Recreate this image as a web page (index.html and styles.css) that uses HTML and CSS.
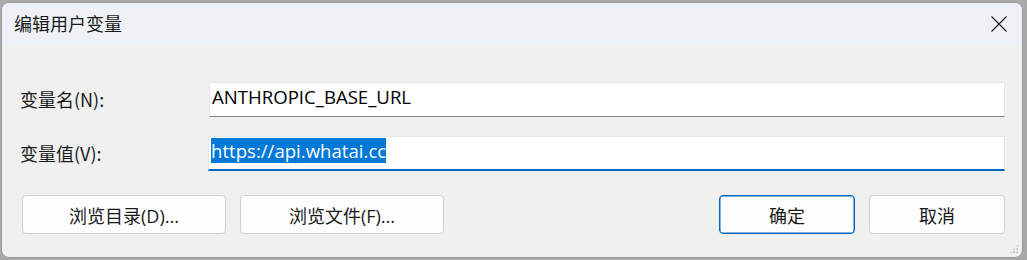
FILE: index.html
```html
<!DOCTYPE html>
<html lang="zh-CN">
<head>
<meta charset="utf-8">
<title>编辑用户变量</title>
<link rel="stylesheet" href="styles.css">
</head>
<body>
<div class="backdrop">
  <div class="window">
    <div class="titlebar">
      <span class="title">编辑用户变量</span>
      <svg class="close" width="16" height="16" viewBox="0 0 16 16"><path d="M0.5 0.5 L15.5 15.5 M15.5 0.5 L0.5 15.5" stroke="#1a1a1a" stroke-width="1.1" fill="none"/></svg>
    </div>
    <div class="content">
      <div class="form">
        <label class="label">变量名(N):</label>
        <div class="field">ANTHROPIC_BASE_URL</div>
        <label class="label">变量值(V):</label>
        <div class="field focused"><span class="sel">https://api.whatai.cc</span></div>
      </div>
      <div class="buttons">
        <div class="btn wide">浏览目录(D)...</div>
        <div class="btn wide">浏览文件(F)...</div>
        <div class="spacer"></div>
        <div class="btn primary">确定</div>
        <div class="btn">取消</div>
      </div>
      <div class="grip"></div>
    </div>
  </div>
</div>
</body>
</html>
```
FILE: styles.css
```css
html, body {
  margin: 0;
  padding: 0;
}
body {
  width: 1027px;
  height: 260px;
  overflow: hidden;
  background: #a9a9a9;
  font-family: "Segoe UI", "Noto Sans", "Noto Sans CJK SC", sans-serif;
}
.backdrop {
  padding: 2px 4px 2px 1px;
  height: 256px;
}
.window {
  height: 256px;
  box-sizing: border-box;
  border-radius: 8px;
  border: 1px solid #9a9a9a;
  overflow: hidden;
  display: flex;
  flex-direction: column;
  background: #f0f0f0;
}
.titlebar {
  height: 41px;
  flex: none;
  background: #eef2f7;
  display: flex;
  align-items: center;
  padding: 0 13px 0 12px;
}
.title {
  font-family: "Noto Sans CJK SC", sans-serif;
  font-size: 18px;
  color: #1a1a1a;
  flex: 1;
  margin-top: -2px;
}
.close {
  display: block;
  margin-right: 2px;
  margin-top: 1px;
}
.content {
  flex: 1;
  position: relative;
  padding: 38px 17px 0 18px;
}
.form {
  display: grid;
  grid-template-columns: 189px 1fr;
  row-gap: 19px;
  align-items: center;
}
.label {
  font-family: "Noto Sans CJK SC", sans-serif;
  font-size: 18px;
  color: #1a1a1a;
  line-height: 35px;
}
.field {
  height: 35px;
  box-sizing: border-box;
  background: #ffffff;
  border: 1px solid #e6e6e6;
  border-bottom: 1px solid #858585;
  font-family: "Open Sans", "Noto Sans", sans-serif;
  font-size: 18.6px;
  line-height: 28px;
  color: #000;
  padding: 0 0 0 2px;
}
.field.focused {
  border-bottom: 2px solid #0067c0;
  margin-left: -1px;
  padding-left: 2px;
}
.sel {
  display: inline-block;
  background: #0078d7;
  color: #fff;
  line-height: 25px;
  margin-top: 1px;
  vertical-align: top;
}
.buttons {
  display: flex;
  gap: 14px;
  margin-top: 24px;
  padding-left: 2px;
}
.btn {
  height: 39px;
  box-sizing: border-box;
  width: 136px;
  border: 1px solid #d0d0d0;
  border-radius: 4px;
  background: #fdfdfd;
  display: flex;
  align-items: center;
  justify-content: center;
  font-family: "Open Sans", "Noto Sans CJK SC", sans-serif;
  font-size: 18px;
  color: #1a1a1a;
}
.btn.wide {
  width: 204px;
}
.btn.primary {
  border: 1px solid #0067c0;
  box-shadow: inset 0 0 0 0.5px #0067c0;
}
.spacer {
  flex: 1;
}
.grip {
  position: absolute;
  right: 3px;
  bottom: 3px;
  width: 10px;
  height: 10px;
  background:
    radial-gradient(circle, #b8b8b8 1px, transparent 1.2px) 0 0 / 3.3px 3.3px;
  clip-path: polygon(100% 0, 100% 100%, 0 100%);
}
```
